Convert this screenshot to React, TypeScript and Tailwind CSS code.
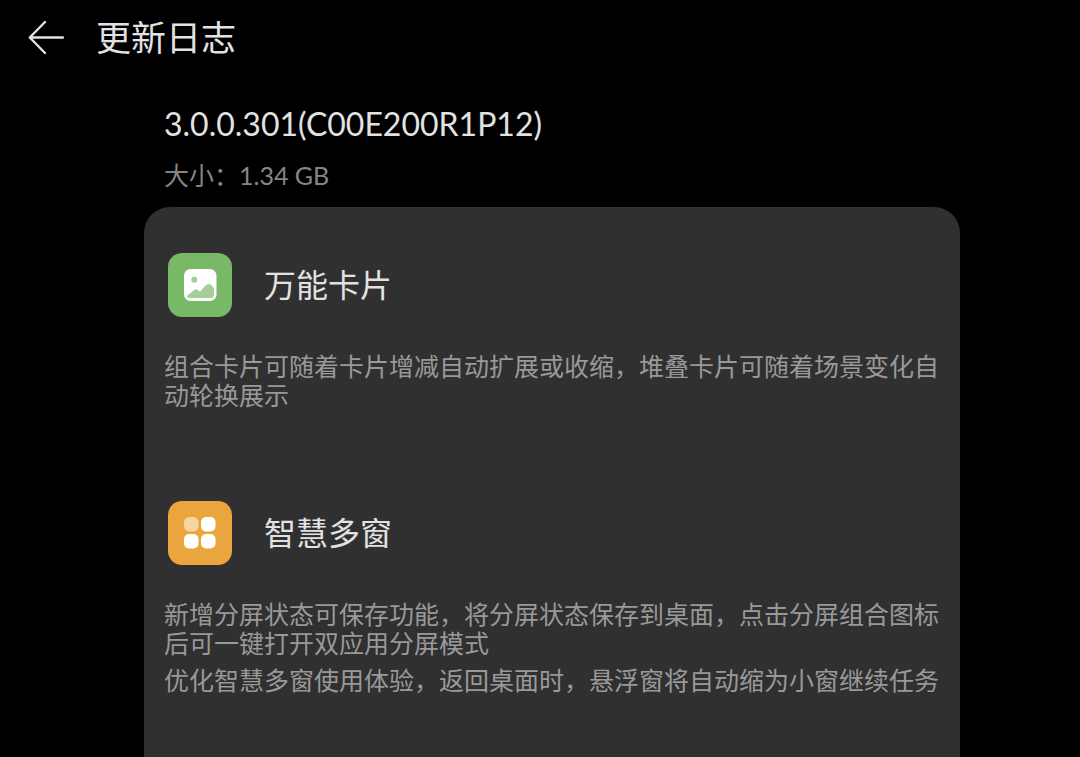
import type { ReactNode } from "react";

interface Feature {
  title: string;
  icon: ReactNode;
  paragraphs: string[];
}

const BackIcon = () => (
  <svg
    className="w-9 h-9"
    viewBox="0 0 36 36"
    fill="none"
    stroke="currentColor"
    strokeWidth={2.4}
    strokeLinecap="round"
    strokeLinejoin="round"
  >
    <path d="M35 18.5H1.8M17 3L1.8 18.5L17 34" />
  </svg>
);

const CardIcon = () => (
  <svg className="w-16 h-16" viewBox="0 0 64 64">
    <rect width="64" height="64" rx="14" fill="#78b866" />
    <rect x="16" y="16" width="32.5" height="32" rx="6.5" fill="#fff" />
    <circle cx="26.3" cy="26.8" r="3" fill="#a5cf99" />
    <path
      d="M19.5 42.5L25.8 37.2Q27.8 35.6 29.6 37L30.6 37.8Q32 38.7 33.4 37.2L37.2 32.8Q40.8 29.4 44 32.6L46 35.6V42Q46 45 43 45H21Q18 44.8 19.5 42.5Z"
      fill="#a5cf99"
    />
  </svg>
);

const WindowIcon = () => (
  <svg className="w-16 h-16" viewBox="0 0 64 64">
    <rect width="64" height="64" rx="14" fill="#eba53f" />
    <rect x="16" y="16" width="14.5" height="14.5" rx="5.5" fill="#f7d5a0" />
    <rect x="33" y="16" width="14.5" height="14.5" rx="5" fill="#fff" />
    <rect x="16" y="33" width="14.5" height="14.5" rx="5" fill="#fff" />
    <rect x="33" y="33" width="14.5" height="14.5" rx="5" fill="#fff" />
  </svg>
);

const FEATURES: Feature[] = [
  {
    title: "万能卡片",
    icon: <CardIcon />,
    paragraphs: [
      "组合卡片可随着卡片增减自动扩展或收缩，堆叠卡片可随着场景变化自动轮换展示",
    ],
  },
  {
    title: "智慧多窗",
    icon: <WindowIcon />,
    paragraphs: [
      "新增分屏状态可保存功能，将分屏状态保存到桌面，点击分屏组合图标后可一键打开双应用分屏模式",
      "优化智慧多窗使用体验，返回桌面时，悬浮窗将自动缩为小窗继续任务",
    ],
  },
];

const FeatureSection = ({ title, icon, paragraphs }: Feature) => (
  <section>
    <div className="flex items-center gap-8 pl-1">
      {icon}
      <h3 className="text-[32px] leading-10 text-[#e2e2e2]">{title}</h3>
    </div>
    <div className="mt-[35px] flex flex-col gap-2 text-[25px] leading-[29px] text-[#999999]">
      {paragraphs.map((text) => (
        <p key={text}>{text}</p>
      ))}
    </div>
  </section>
);

const App = () => {
  return (
    <div className="min-h-screen flex flex-col bg-black font-['Lato','Noto_Sans_CJK_SC',sans-serif]">
      {/* Header */}
      <header className="flex items-center gap-8 h-[74px] px-7 text-[#e2e2e2]">
        <button type="button" aria-label="返回" className="cursor-pointer">
          <BackIcon />
        </button>
        <h1 className="text-[35px] leading-10">更新日志</h1>
      </header>

      <main className="flex-1 flex flex-col pl-36 pr-30">
        {/* Version */}
        <div className="px-5 pt-7 pb-[14px]">
          <h2 className="text-[32px] leading-[44px] text-[#e2e2e2]">
            3.0.0.301(C00E200R1P12)
          </h2>
          <p className="mt-[11px] text-[25px] leading-9 text-[#858585]">
            大小：1.34 GB
          </p>
        </div>

        {/* Change list */}
        <div className="flex-1 flex flex-col gap-[91px] px-5 pt-[46px] pb-12 rounded-t-[26px] bg-[#303030]">
          {FEATURES.map((feature) => (
            <FeatureSection key={feature.title} {...feature} />
          ))}
        </div>
      </main>
    </div>
  );
};

export default App;
